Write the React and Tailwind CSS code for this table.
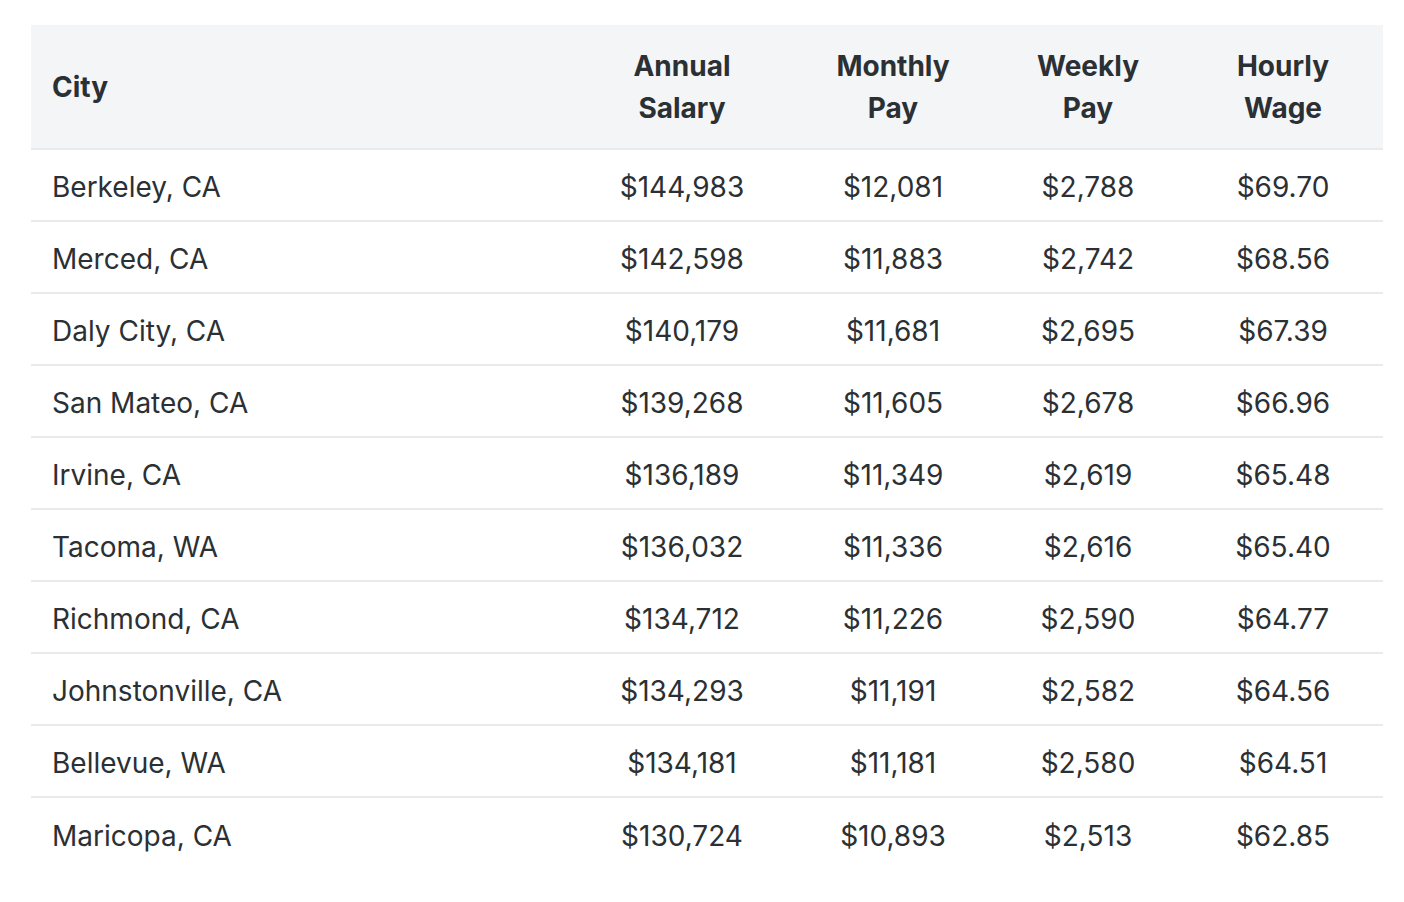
const rows = [
  ["Berkeley, CA", "$144,983", "$12,081", "$2,788", "$69.70"],
  ["Merced, CA", "$142,598", "$11,883", "$2,742", "$68.56"],
  ["Daly City, CA", "$140,179", "$11,681", "$2,695", "$67.39"],
  ["San Mateo, CA", "$139,268", "$11,605", "$2,678", "$66.96"],
  ["Irvine, CA", "$136,189", "$11,349", "$2,619", "$65.48"],
  ["Tacoma, WA", "$136,032", "$11,336", "$2,616", "$65.40"],
  ["Richmond, CA", "$134,712", "$11,226", "$2,590", "$64.77"],
  ["Johnstonville, CA", "$134,293", "$11,191", "$2,582", "$64.56"],
  ["Bellevue, WA", "$134,181", "$11,181", "$2,580", "$64.51"],
  ["Maricopa, CA", "$130,724", "$10,893", "$2,513", "$62.85"],
];

const cols = "grid grid-cols-[540px_222px_200px_190px_200px]";

export default function App() {
  return (
    <div
      className="min-h-[902px] w-[1404px] bg-white pt-[25px] pl-[31px] text-[#2b3034]"
      style={{ fontFamily: "Inter, 'Noto Sans', sans-serif" }}
    >
      <div className="w-[1352px]">
        <div className={`${cols} h-[125px] items-center border-b-2 border-[#e9eaec] bg-[#f4f5f7] text-[28px] font-bold leading-[42px]`}>
          <div className="pl-[21px]">City</div>
          <div className="text-center">Annual<br />Salary</div>
          <div className="text-center">Monthly<br />Pay</div>
          <div className="text-center">Weekly<br />Pay</div>
          <div className="text-center">Hourly<br />Wage</div>
        </div>
        {rows.map((r, i) => (
          <div
            key={r[0]}
            className={`${cols} h-[72px] items-center pt-[3px] text-[28px] leading-[42px] ${
              i < rows.length - 1 ? "border-b-2 border-[#e9eaec]" : ""
            }`}
          >
            <div className="pl-[21px]">{r[0]}</div>
            <div className="text-center">{r[1]}</div>
            <div className="text-center">{r[2]}</div>
            <div className="text-center">{r[3]}</div>
            <div className="text-center">{r[4]}</div>
          </div>
        ))}
      </div>
    </div>
  );
}
